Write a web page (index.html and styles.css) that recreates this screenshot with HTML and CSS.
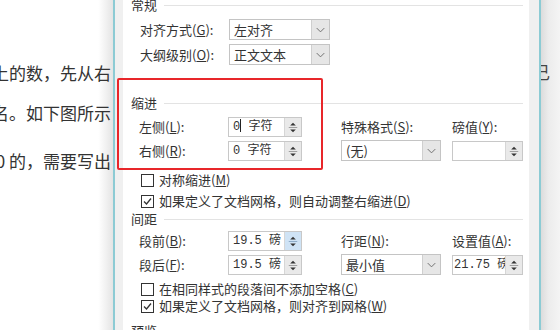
FILE: index.html
```html
<!DOCTYPE html>
<html lang="zh-CN">
<head>
<meta charset="utf-8">
<title>段落</title>
<link rel="stylesheet" href="styles.css">
</head>
<body>
<div class="screen">
  <div class="doc">
    <p class="doc-line l1">时要先找出比它大的位置上的数，先从右</p>
    <p class="doc-line l2">个数字的排名。如下图所示</p>
    <p class="doc-line l3">那么排名为 0 的，需要写出</p>
  </div>

  <div class="dialog">
    <div class="panel">
      <div class="group-title t1">常规</div>
      <div class="grid grid-general">
        <span class="label">对齐方式(<u>G</u>):</span>
        <div class="select"><span class="select-val">左对齐</span><span class="select-btn"><svg width="18" height="19" viewBox="0 0 18 19"><polyline points="5,8 9,12 13,8" fill="none" stroke="#6a6a6a" stroke-width="1"/></svg></span></div>
        <span class="label">大纲级别(<u>O</u>):</span>
        <div class="select"><span class="select-val">正文文本</span><span class="select-btn"><svg width="18" height="19" viewBox="0 0 18 19"><polyline points="5,8 9,12 13,8" fill="none" stroke="#6a6a6a" stroke-width="1"/></svg></span></div>
      </div>

      <div class="group-title t2">缩进</div>
      <div class="grid grid-two">
        <span class="label">左侧(<u>L</u>):</span>
        <div class="spin"><span class="spin-val">0<i class="caret"></i> 字符</span><span class="spin-btn"><svg width="17" height="19" viewBox="0 0 17 19"><polygon points="5.5,7.5 11.5,7.5 8.5,4.5" fill="#333"/><line x1="4" y1="9.5" x2="13" y2="9.5" stroke="#9a9a9a"/><polygon points="5.5,11.5 11.5,11.5 8.5,14.5" fill="#333"/></svg></span></div>
        <span></span>
        <span class="label">特殊格式(<u>S</u>):</span>
        <span></span>
        <span class="label">磅值(<u>Y</u>):</span>

        <span class="label">右侧(<u>R</u>):</span>
        <div class="spin"><span class="spin-val">0 字符</span><span class="spin-btn"><svg width="17" height="19" viewBox="0 0 17 19"><polygon points="5.5,7.5 11.5,7.5 8.5,4.5" fill="#333"/><line x1="4" y1="9.5" x2="13" y2="9.5" stroke="#9a9a9a"/><polygon points="5.5,11.5 11.5,11.5 8.5,14.5" fill="#333"/></svg></span></div>
        <span></span>
        <div class="select"><span class="select-val">(无)</span><span class="select-btn"><svg width="18" height="19" viewBox="0 0 18 19"><polyline points="5,8 9,12 13,8" fill="none" stroke="#6a6a6a" stroke-width="1"/></svg></span></div>
        <span></span>
        <div class="spin"><span class="spin-val"></span><span class="spin-btn"><svg width="17" height="19" viewBox="0 0 17 19"><polygon points="5.5,7.5 11.5,7.5 8.5,4.5" fill="#333"/><line x1="4" y1="9.5" x2="13" y2="9.5" stroke="#9a9a9a"/><polygon points="5.5,11.5 11.5,11.5 8.5,14.5" fill="#333"/></svg></span></div>
      </div>

      <div class="check cb1"><span class="box"></span><span class="check-text">对称缩进(<u>M</u>)</span></div>
      <div class="check cb2"><span class="box"><svg width="11" height="11" viewBox="0 0 11 11"><polyline points="2,5.5 4.5,8 9,2.5" fill="none" stroke="#333" stroke-width="1.3"/></svg></span><span class="check-text">如果定义了文档网格，则自动调整右缩进(<u>D</u>)</span></div>

      <div class="group-title t3">间距</div>
      <div class="grid grid-two">
        <span class="label">段前(<u>B</u>):</span>
        <div class="spin"><span class="spin-val">19.5 磅</span><span class="spin-btn hot"><svg width="17" height="19" viewBox="0 0 17 19"><polygon points="5.5,7.5 11.5,7.5 8.5,4.5" fill="#333"/><line x1="4" y1="9.5" x2="13" y2="9.5" stroke="#8aa8c4"/><polygon points="5.5,11.5 11.5,11.5 8.5,14.5" fill="#333"/></svg></span></div>
        <span></span>
        <span class="label">行距(<u>N</u>):</span>
        <span></span>
        <span class="label">设置值(<u>A</u>):</span>

        <span class="label">段后(<u>F</u>):</span>
        <div class="spin"><span class="spin-val">19.5 磅</span><span class="spin-btn"><svg width="17" height="19" viewBox="0 0 17 19"><polygon points="5.5,7.5 11.5,7.5 8.5,4.5" fill="#333"/><line x1="4" y1="9.5" x2="13" y2="9.5" stroke="#9a9a9a"/><polygon points="5.5,11.5 11.5,11.5 8.5,14.5" fill="#333"/></svg></span></div>
        <span></span>
        <div class="select"><span class="select-val">最小值</span><span class="select-btn"><svg width="18" height="19" viewBox="0 0 18 19"><polyline points="5,8 9,12 13,8" fill="none" stroke="#6a6a6a" stroke-width="1"/></svg></span></div>
        <span></span>
        <div class="spin"><span class="spin-val tight">21.75 磅</span><span class="spin-btn"><svg width="17" height="19" viewBox="0 0 17 19"><polygon points="5.5,7.5 11.5,7.5 8.5,4.5" fill="#333"/><line x1="4" y1="9.5" x2="13" y2="9.5" stroke="#9a9a9a"/><polygon points="5.5,11.5 11.5,11.5 8.5,14.5" fill="#333"/></svg></span></div>
      </div>

      <div class="check cb3"><span class="box"></span><span class="check-text">在相同样式的段落间不添加空格(<u>C</u>)</span></div>
      <div class="check cb4"><span class="box"><svg width="11" height="11" viewBox="0 0 11 11"><polyline points="2,5.5 4.5,8 9,2.5" fill="none" stroke="#333" stroke-width="1.3"/></svg></span><span class="check-text">如果定义了文档网格，则对齐到网格(<u>W</u>)</span></div>

      <div class="group-title t4">预览</div>

      <div class="highlight"></div>
    </div>
  </div>

  <div class="shadow"><span class="shadow-text">己</span></div>
</div>
</body>
</html>
```

FILE: styles.css
```css
* { box-sizing: border-box; }

html, body {
  margin: 0;
  padding: 0;
  background: #ffffff;
}

body {
  font-family: "Noto Sans CJK SC", "Noto Sans", sans-serif;
  font-size: 13px;
  color: #333333;
}

.screen {
  width: 560px;
  height: 330px;
  display: flex;
  overflow: hidden;
}

/* document behind the dialog */
.doc {
  width: 113px;
  flex: none;
  display: flex;
  flex-direction: column;
  align-items: flex-end;
  overflow: hidden;
  background: linear-gradient(to right, #ffffff 0, #ffffff 87%, #e4e4e4 100%);
  padding-right: 2px;
}

.doc-line {
  margin: 0;
  white-space: nowrap;
  font-size: 17px;
  line-height: 20px;
  height: 20px;
  color: #333333;
}

.l1 { margin-top: 63px; }
.l2 { margin-top: 20px; }
.l3 { margin-top: 28px; }

/* dialog frame */
.dialog {
  width: 428px;
  flex: none;
  display: flex;
  background: #f0f0f0;
  border-left: 2px solid #8ccbd4;
  border-right: 2px solid #8ccbd4;
  padding: 0 10px 0 8px;
}

.panel {
  position: relative;
  flex: 1;
  background: #ffffff;
  padding: 0 6px 0 8px;
  display: flex;
  flex-direction: column;
}

.group-title {
  display: flex;
  align-items: center;
  height: 16px;
  line-height: 16px;
  color: #333333;
  flex: none;
}

.group-title::after {
  content: "";
  flex: 1;
  border-top: 1px solid #e3e3e3;
  margin-left: 7px;
}

.t1 { margin-top: -3px; }
.t2 { margin-top: 30px; }
.t3 { margin-top: 2px; }
.t4 { margin-top: 9px; }

u {
  text-decoration: underline;
  text-underline-offset: 1px;
  text-decoration-thickness: 1px;
}

.grid {
  display: grid;
  flex: none;
  align-items: center;
}

.grid-general {
  margin-top: 6px;
  padding-left: 9px;
  grid-template-columns: 89px 101px;
  grid-template-rows: 21px 21px;
  row-gap: 4px;
}

.grid-two {
  margin-top: 5px;
  padding-left: 8px;
  grid-template-columns: 89px 74px 39px 100px 11px 71px;
  grid-template-rows: 21px 21px;
  row-gap: 3px;
}

.t3 + .grid-two { margin-top: 3px; }

.label {
  white-space: nowrap;
  line-height: 16px;
  color: #333333;
}

/* select box */
.select {
  height: 21px;
  display: flex;
  border: 1px solid #c4c4c4;
  background: #ffffff;
}

.select-val {
  flex: 1;
  padding-left: 4px;
  line-height: 19px;
  white-space: nowrap;
  overflow: hidden;
}

.select-btn {
  width: 18px;
  flex: none;
  background: #e6e6e6;
  border-left: 1px solid #cfcfcf;
  display: flex;
}

/* spin box */
.spin {
  height: 20px;
  display: flex;
  border: 1px solid #c8c8c8;
  background: #ffffff;
}

.spin-val {
  flex: 1;
  padding-left: 4px;
  font-family: "Liberation Mono", "Noto Sans CJK SC", monospace;
  font-size: 12px;
  line-height: 18px;
  white-space: nowrap;
  overflow: hidden;
  color: #333333;
}

.spin-val.tight { padding-left: 1px; }

.caret {
  display: inline-block;
  width: 1px;
  height: 13px;
  background: #222222;
  vertical-align: -2px;
}

.spin-btn {
  width: 17px;
  flex: none;
  background: #e9e9e9;
  border-left: 1px solid #d6d6d6;
  display: flex;
}

.spin-btn.hot { background: #cfe3f5; }

/* checkboxes */
.check {
  display: flex;
  align-items: center;
  gap: 5px;
  height: 16px;
  padding-left: 10px;
  white-space: nowrap;
  flex: none;
  color: #333333;
}

.check-text {
  line-height: 16px;
  height: 16px;
}

.box {
  width: 13px;
  height: 13px;
  flex: none;
  border: 1px solid #333333;
  background: #ffffff;
  display: flex;
  align-items: center;
  justify-content: center;
}

.cb1 { margin-top: 11px; }
.cb2 { margin-top: 5px; }
.cb3 { margin-top: 6px; }
.cb4 { margin-top: 1px; }

/* red annotation box over the indent group */
.highlight {
  position: absolute;
  left: -6px;
  top: 78px;
  width: 206px;
  height: 92px;
  border: 2px solid #e8262a;
  border-radius: 2px;
  pointer-events: none;
}

/* right-hand shadow */
.shadow {
  flex: 1;
  background: linear-gradient(to right, #dcdcdc 0, #ececec 40%, #f4f4f4 100%);
  overflow: hidden;
  white-space: nowrap;
}

.shadow-text {
  display: block;
  margin-top: 62px;
  margin-left: -8px;
  font-size: 17px;
  line-height: 20px;
  color: #444444;
}
```
